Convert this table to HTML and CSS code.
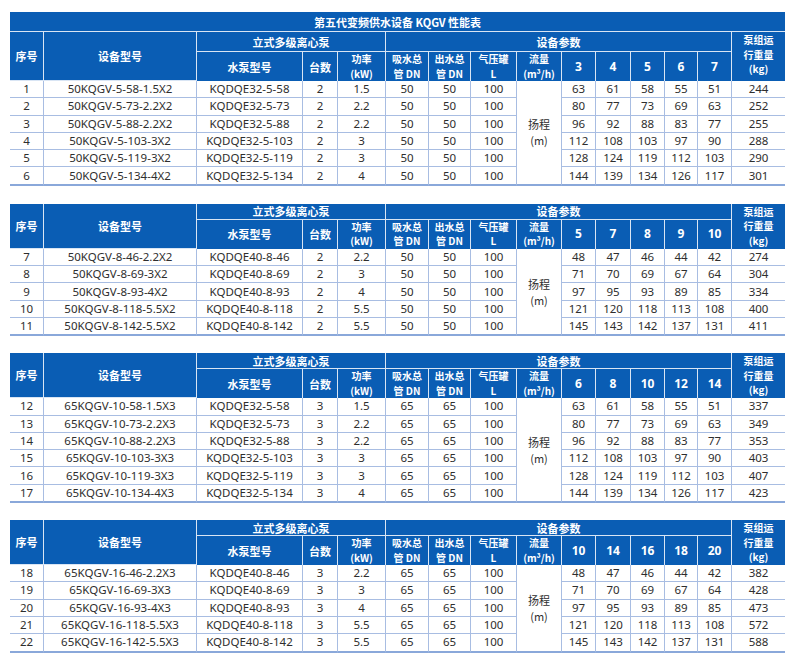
FILE: index.html
```html
<!DOCTYPE html>
<html lang="zh">
<head>
<meta charset="utf-8">
<title>第五代变频供水设备 KQGV 性能表</title>
<link rel="stylesheet" href="styles.css">
</head>
<body>
<div class="page">

<table class="spec">
<colgroup><col class="c1"><col class="c2"><col class="c3"><col class="c4"><col class="c5"><col class="c6"><col class="c7"><col class="c8"><col class="c9"><col class="c10"><col class="c11"><col class="c12"><col class="c13"><col class="c14"><col class="c15"></colgroup>
<thead>
<tr class="title"><th colspan="15" class="last">第五代变频供水设备 KQGV 性能表</th></tr>
<tr class="h1 h1t"><th rowspan="2">序号</th><th rowspan="2">设备型号</th><th colspan="3">立式多级离心泵</th><th colspan="9">设备参数</th><th rowspan="2" class="last wt">泵组运<br>行重量<br>(kg)</th></tr>
<tr class="h2"><th>水泵型号</th><th>台数</th><th class="ml">功率<br>(kW)</th><th class="ml">吸水总<br>管 DN</th><th class="ml">出水总<br>管 DN</th><th class="ml">气压罐<br>L</th><th class="ml">流量<br>(m³/h)</th><th class="n">3</th><th class="n">4</th><th class="n">5</th><th class="n">6</th><th class="n">7</th></tr>
</thead>
<tbody>
<tr><td>1</td><td>50KQGV-5-58-1.5X2</td><td>KQDQE32-5-58</td><td>2</td><td>1.5</td><td>50</td><td>50</td><td>100</td><td rowspan="6" class="lift">扬程<br>(m)</td><td>63</td><td>61</td><td>58</td><td>55</td><td>51</td><td class="last">244</td></tr>
<tr><td>2</td><td>50KQGV-5-73-2.2X2</td><td>KQDQE32-5-73</td><td>2</td><td>2.2</td><td>50</td><td>50</td><td>100</td><td>80</td><td>77</td><td>73</td><td>69</td><td>63</td><td class="last">252</td></tr>
<tr><td>3</td><td>50KQGV-5-88-2.2X2</td><td>KQDQE32-5-88</td><td>2</td><td>2.2</td><td>50</td><td>50</td><td>100</td><td>96</td><td>92</td><td>88</td><td>83</td><td>77</td><td class="last">255</td></tr>
<tr><td>4</td><td>50KQGV-5-103-3X2</td><td>KQDQE32-5-103</td><td>2</td><td>3</td><td>50</td><td>50</td><td>100</td><td>112</td><td>108</td><td>103</td><td>97</td><td>90</td><td class="last">288</td></tr>
<tr><td>5</td><td>50KQGV-5-119-3X2</td><td>KQDQE32-5-119</td><td>2</td><td>3</td><td>50</td><td>50</td><td>100</td><td>128</td><td>124</td><td>119</td><td>112</td><td>103</td><td class="last">290</td></tr>
<tr class="end"><td>6</td><td>50KQGV-5-134-4X2</td><td>KQDQE32-5-134</td><td>2</td><td>4</td><td>50</td><td>50</td><td>100</td><td>144</td><td>139</td><td>134</td><td>126</td><td>117</td><td class="last">301</td></tr>
</tbody>
</table>

<table class="spec first-gap">
<colgroup><col class="c1"><col class="c2"><col class="c3"><col class="c4"><col class="c5"><col class="c6"><col class="c7"><col class="c8"><col class="c9"><col class="c10"><col class="c11"><col class="c12"><col class="c13"><col class="c14"><col class="c15"></colgroup>
<thead>
<tr class="h1"><th rowspan="2">序号</th><th rowspan="2">设备型号</th><th colspan="3">立式多级离心泵</th><th colspan="9">设备参数</th><th rowspan="2" class="last wt">泵组运<br>行重量<br>(kg)</th></tr>
<tr class="h2"><th>水泵型号</th><th>台数</th><th class="ml">功率<br>(kW)</th><th class="ml">吸水总<br>管 DN</th><th class="ml">出水总<br>管 DN</th><th class="ml">气压罐<br>L</th><th class="ml">流量<br>(m³/h)</th><th class="n">5</th><th class="n">7</th><th class="n">8</th><th class="n">9</th><th class="n">10</th></tr>
</thead>
<tbody>
<tr><td>7</td><td>50KQGV-8-46-2.2X2</td><td>KQDQE40-8-46</td><td>2</td><td>2.2</td><td>50</td><td>50</td><td>100</td><td rowspan="5" class="lift">扬程<br>(m)</td><td>48</td><td>47</td><td>46</td><td>44</td><td>42</td><td class="last">274</td></tr>
<tr><td>8</td><td>50KQGV-8-69-3X2</td><td>KQDQE40-8-69</td><td>2</td><td>3</td><td>50</td><td>50</td><td>100</td><td>71</td><td>70</td><td>69</td><td>67</td><td>64</td><td class="last">304</td></tr>
<tr><td>9</td><td>50KQGV-8-93-4X2</td><td>KQDQE40-8-93</td><td>2</td><td>4</td><td>50</td><td>50</td><td>100</td><td>97</td><td>95</td><td>93</td><td>89</td><td>85</td><td class="last">334</td></tr>
<tr><td>10</td><td>50KQGV-8-118-5.5X2</td><td>KQDQE40-8-118</td><td>2</td><td>5.5</td><td>50</td><td>50</td><td>100</td><td>121</td><td>120</td><td>118</td><td>113</td><td>108</td><td class="last">400</td></tr>
<tr class="end"><td>11</td><td>50KQGV-8-142-5.5X2</td><td>KQDQE40-8-142</td><td>2</td><td>5.5</td><td>50</td><td>50</td><td>100</td><td>145</td><td>143</td><td>142</td><td>137</td><td>131</td><td class="last">411</td></tr>
</tbody>
</table>

<table class="spec gap">
<colgroup><col class="c1"><col class="c2"><col class="c3"><col class="c4"><col class="c5"><col class="c6"><col class="c7"><col class="c8"><col class="c9"><col class="c10"><col class="c11"><col class="c12"><col class="c13"><col class="c14"><col class="c15"></colgroup>
<thead>
<tr class="h1"><th rowspan="2">序号</th><th rowspan="2">设备型号</th><th colspan="3">立式多级离心泵</th><th colspan="9">设备参数</th><th rowspan="2" class="last wt">泵组运<br>行重量<br>(kg)</th></tr>
<tr class="h2"><th>水泵型号</th><th>台数</th><th class="ml">功率<br>(kW)</th><th class="ml">吸水总<br>管 DN</th><th class="ml">出水总<br>管 DN</th><th class="ml">气压罐<br>L</th><th class="ml">流量<br>(m³/h)</th><th class="n">6</th><th class="n">8</th><th class="n">10</th><th class="n">12</th><th class="n">14</th></tr>
</thead>
<tbody>
<tr><td>12</td><td>65KQGV-10-58-1.5X3</td><td>KQDQE32-5-58</td><td>3</td><td>1.5</td><td>65</td><td>65</td><td>100</td><td rowspan="6" class="lift">扬程<br>(m)</td><td>63</td><td>61</td><td>58</td><td>55</td><td>51</td><td class="last">337</td></tr>
<tr><td>13</td><td>65KQGV-10-73-2.2X3</td><td>KQDQE32-5-73</td><td>3</td><td>2.2</td><td>65</td><td>65</td><td>100</td><td>80</td><td>77</td><td>73</td><td>69</td><td>63</td><td class="last">349</td></tr>
<tr><td>14</td><td>65KQGV-10-88-2.2X3</td><td>KQDQE32-5-88</td><td>3</td><td>2.2</td><td>65</td><td>65</td><td>100</td><td>96</td><td>92</td><td>88</td><td>83</td><td>77</td><td class="last">353</td></tr>
<tr><td>15</td><td>65KQGV-10-103-3X3</td><td>KQDQE32-5-103</td><td>3</td><td>3</td><td>65</td><td>65</td><td>100</td><td>112</td><td>108</td><td>103</td><td>97</td><td>90</td><td class="last">403</td></tr>
<tr><td>16</td><td>65KQGV-10-119-3X3</td><td>KQDQE32-5-119</td><td>3</td><td>3</td><td>65</td><td>65</td><td>100</td><td>128</td><td>124</td><td>119</td><td>112</td><td>103</td><td class="last">407</td></tr>
<tr class="end"><td>17</td><td>65KQGV-10-134-4X3</td><td>KQDQE32-5-134</td><td>3</td><td>4</td><td>65</td><td>65</td><td>100</td><td>144</td><td>139</td><td>134</td><td>126</td><td>117</td><td class="last">423</td></tr>
</tbody>
</table>

<table class="spec gap">
<colgroup><col class="c1"><col class="c2"><col class="c3"><col class="c4"><col class="c5"><col class="c6"><col class="c7"><col class="c8"><col class="c9"><col class="c10"><col class="c11"><col class="c12"><col class="c13"><col class="c14"><col class="c15"></colgroup>
<thead>
<tr class="h1"><th rowspan="2">序号</th><th rowspan="2">设备型号</th><th colspan="3">立式多级离心泵</th><th colspan="9">设备参数</th><th rowspan="2" class="last wt">泵组运<br>行重量<br>(kg)</th></tr>
<tr class="h2"><th>水泵型号</th><th>台数</th><th class="ml">功率<br>(kW)</th><th class="ml">吸水总<br>管 DN</th><th class="ml">出水总<br>管 DN</th><th class="ml">气压罐<br>L</th><th class="ml">流量<br>(m³/h)</th><th class="n">10</th><th class="n">14</th><th class="n">16</th><th class="n">18</th><th class="n">20</th></tr>
</thead>
<tbody>
<tr><td>18</td><td>65KQGV-16-46-2.2X3</td><td>KQDQE40-8-46</td><td>3</td><td>2.2</td><td>65</td><td>65</td><td>100</td><td rowspan="5" class="lift">扬程<br>(m)</td><td>48</td><td>47</td><td>46</td><td>44</td><td>42</td><td class="last">382</td></tr>
<tr><td>19</td><td>65KQGV-16-69-3X3</td><td>KQDQE40-8-69</td><td>3</td><td>3</td><td>65</td><td>65</td><td>100</td><td>71</td><td>70</td><td>69</td><td>67</td><td>64</td><td class="last">428</td></tr>
<tr><td>20</td><td>65KQGV-16-93-4X3</td><td>KQDQE40-8-93</td><td>3</td><td>4</td><td>65</td><td>65</td><td>100</td><td>97</td><td>95</td><td>93</td><td>89</td><td>85</td><td class="last">473</td></tr>
<tr><td>21</td><td>65KQGV-16-118-5.5X3</td><td>KQDQE40-8-118</td><td>3</td><td>5.5</td><td>65</td><td>65</td><td>100</td><td>121</td><td>120</td><td>118</td><td>113</td><td>108</td><td class="last">572</td></tr>
<tr class="end"><td>22</td><td>65KQGV-16-142-5.5X3</td><td>KQDQE40-8-142</td><td>3</td><td>5.5</td><td>65</td><td>65</td><td>100</td><td>145</td><td>143</td><td>142</td><td>137</td><td>131</td><td class="last">588</td></tr>
</tbody>
</table>

</div>
</body>
</html>
```

FILE: styles.css
```css
html, body {
  margin: 0;
  padding: 0;
  background: #ffffff;
}

.page {
  padding: 12px 5px 0 10px;
  font-family: "Noto Sans", "Noto Sans CJK SC", sans-serif;
}

.spec {
  width: 775px;
  table-layout: fixed;
  border-collapse: separate;
  border-spacing: 0;
}

.first-gap { margin-top: 18px; }
.gap { margin-top: 17px; }

.c1 { width: 34px; }
.c2 { width: 153px; }
.c3 { width: 106px; }
.c4 { width: 35px; }
.c5 { width: 48px; }
.c6 { width: 43px; }
.c7 { width: 42px; }
.c8 { width: 46px; }
.c9 { width: 45px; }
.c10 { width: 34px; }
.c11 { width: 35px; }
.c12 { width: 34px; }
.c13 { width: 33px; }
.c14 { width: 34px; }
.c15 { width: 53px; }

.spec th {
  background: #0a5db4;
  color: #ffffff;
  font-family: "Noto Sans CJK SC", "Noto Sans", sans-serif;
  font-weight: 700;
  font-size: 11px;
  line-height: 14px;
  padding: 0;
  text-align: center;
  vertical-align: middle;
  border-right: 1px solid #d9e5f4;
  border-bottom: 1px solid #d9e5f4;
}

.spec th.last { border-right: none; }

.spec tr.title th {
  height: 19px;
  font-size: 11px;
}

.spec tr.h1 th { height: 15px; }
.spec tr.h1t th { height: 19px; }

.spec tr.h2 th {
  height: 29px;
  border-bottom: none;
}

.spec th.ml {
  font-size: 10px;
  line-height: 14.5px;
}

.spec th.wt {
  border-bottom: none;
  vertical-align: top;
  padding-top: 1px;
  font-size: 10px;
  line-height: 14.5px;
}

.spec th.n {
  font-family: "Noto Sans", sans-serif;
  font-size: 12px;
}

.spec td {
  height: 16.3px;
  padding: 0;
  text-align: center;
  vertical-align: middle;
  font-size: 11.5px;
  line-height: 14px;
  color: #2e2e2e;
  border-right: 1px solid #a8bde2;
  border-bottom: 1px solid #a8bde2;
  white-space: nowrap;
}

.spec td.last { border-right: none; }

.spec tr.end td { border-bottom: 2px solid #8aa8da; }

.spec td.lift {
  font-family: "Noto Sans CJK SC", "Noto Sans", sans-serif;
  font-size: 11px;
  line-height: 16px;
  border-bottom: 2px solid #8aa8da;
}
```
